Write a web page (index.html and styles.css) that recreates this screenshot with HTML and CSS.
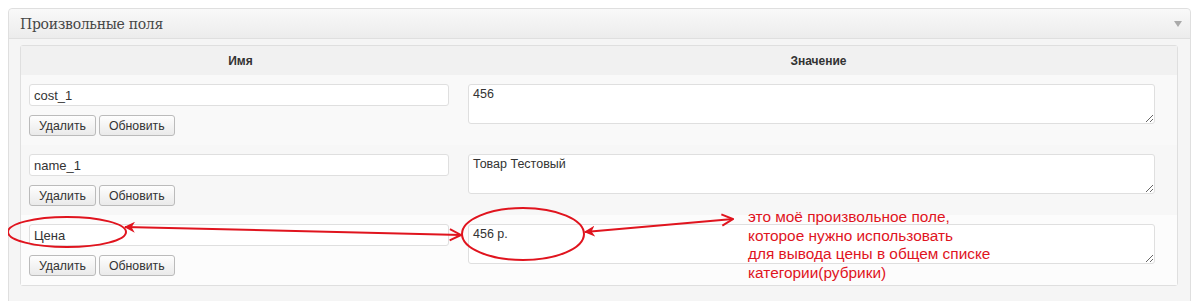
FILE: index.html
```html
<!DOCTYPE html>
<html lang="ru">
<head>
  <meta charset="UTF-8">
  <title>Произвольные поля</title>
  <link rel="stylesheet" href="styles.css">
</head>
<body>
  <div class="postbox">
    <div class="postbox-head">
      <h3>Произвольные поля</h3>
      <span class="toggle"></span>
    </div>
    <div class="inside">
      <table class="list-table">
        <colgroup><col class="col-key"><col></colgroup>
        <thead>
          <tr><th>Имя</th><th>Значение</th></tr>
        </thead>
        <tbody>
          <tr>
            <td>
              <input class="key" type="text" value="cost_1">
              <div class="actions"><button>Удалить</button><button>Обновить</button></div>
            </td>
            <td><textarea>456</textarea></td>
          </tr>
          <tr class="alt">
            <td>
              <input class="key" type="text" value="name_1">
              <div class="actions"><button>Удалить</button><button>Обновить</button></div>
            </td>
            <td><textarea>Товар Тестовый</textarea></td>
          </tr>
          <tr>
            <td>
              <input class="key" type="text" value="Цена">
              <div class="actions"><button>Удалить</button><button>Обновить</button></div>
            </td>
            <td><textarea>456 р.</textarea></td>
          </tr>
        </tbody>
      </table>
    </div>
  </div>

  <!-- пометки поверх скриншота -->
  <svg class="marks" width="1199" height="301" viewBox="0 0 1199 301">
    <defs>
      <marker id="head" viewBox="0 0 10 10" refX="9" refY="5" markerWidth="11" markerHeight="11" markerUnits="userSpaceOnUse" orient="auto-start-reverse">
        <path d="M0 0 L10 5 L0 10 L3 5 Z" fill="#e0141e"/>
      </marker>
      <marker id="open" viewBox="0 0 10 10" refX="9" refY="5" markerWidth="14" markerHeight="14" markerUnits="userSpaceOnUse" orient="auto">
        <path d="M1 1 L9 5 L1 9" fill="none" stroke="#e0141e" stroke-width="1.4"/>
      </marker>
    </defs>
    <ellipse cx="67" cy="232" rx="59" ry="15" fill="none" stroke="#e0141e" stroke-width="2"/>
    <ellipse cx="523" cy="234" rx="61" ry="26" fill="none" stroke="#e0141e" stroke-width="2"/>
    <line x1="125" y1="227" x2="461" y2="235" stroke="#e0141e" stroke-width="2" marker-start="url(#head)" marker-end="url(#open)"/>
    <line x1="585" y1="232" x2="733" y2="219" stroke="#e0141e" stroke-width="2" marker-start="url(#head)" marker-end="url(#open)"/>
  </svg>
  <div class="note">это моё произвольное поле,<br>которое нужно использовать<br>для вывода цены в общем списке<br>категории(рубрики)</div>
</body>
</html>
```

FILE: styles.css
```css
* { box-sizing:border-box; }
body { margin:8px; background:#fff; font-family:"Liberation Sans",Arial,sans-serif; color:#333; position:relative; }

.postbox { border:1px solid #dfdfdf; border-radius:4px; background:#f5f5f5; height:300px; }
.postbox-head { height:30px; display:flex; align-items:center; justify-content:space-between; padding:0 11px;
                background:linear-gradient(#f9f9f9,#ececec); border-bottom:1px solid #dfdfdf; border-radius:4px 4px 0 0; }
.postbox-head h3 { margin:0; font:normal 14px "DejaVu Serif","Liberation Serif",serif; color:#464646; letter-spacing:-0.3px; }
.toggle { width:0; height:0; border-left:4px solid transparent; border-right:4px solid transparent;
          border-top:6px solid #aaa; margin-right:-3px; }

.inside { padding:6px 12px 0 11px; }
.list-table { width:100%; border-collapse:separate; border-spacing:0; border:1px solid #dfdfdf; border-radius:3px; background:#f9f9f9; }
.col-key { width:439px; }
.list-table th { height:29px; background:#f1f1f1; font-size:12px; font-weight:bold; color:#333; text-align:center; }
.list-table td { padding:9px 8px; vertical-align:top; background:#f9f9f9; }
.list-table tr.alt td { background:#f7f7f7; }
.list-table tbody tr:last-child td { background:#fcfcfc; }

.key { display:block; width:420px; height:22px; margin:0; padding:0 4px; border:1px solid #dfdfdf; border-radius:3px;
       background:#fff; font:13px "Liberation Sans",Arial,sans-serif; color:#333; }
textarea { display:block; width:687px; height:40px; margin:0; padding:2px 4px; border:1px solid #dfdfdf; border-radius:3px;
           background:#fff; font:12.5px "Liberation Sans",Arial,sans-serif; color:#333; }

.actions { display:flex; gap:3px; margin-top:9px; }
.actions button { height:21px; padding:0 9px; border:1px solid #bbb; border-radius:3px; background:linear-gradient(#fefefe,#eaeaea);
                  font:12.3px "Liberation Sans",Arial,sans-serif; color:#333; }

.marks { position:absolute; left:-8px; top:-8px; pointer-events:none; }
.note { position:absolute; left:740px; top:200px; font-size:15.4px; line-height:18.7px; color:#e0141e; }
```
